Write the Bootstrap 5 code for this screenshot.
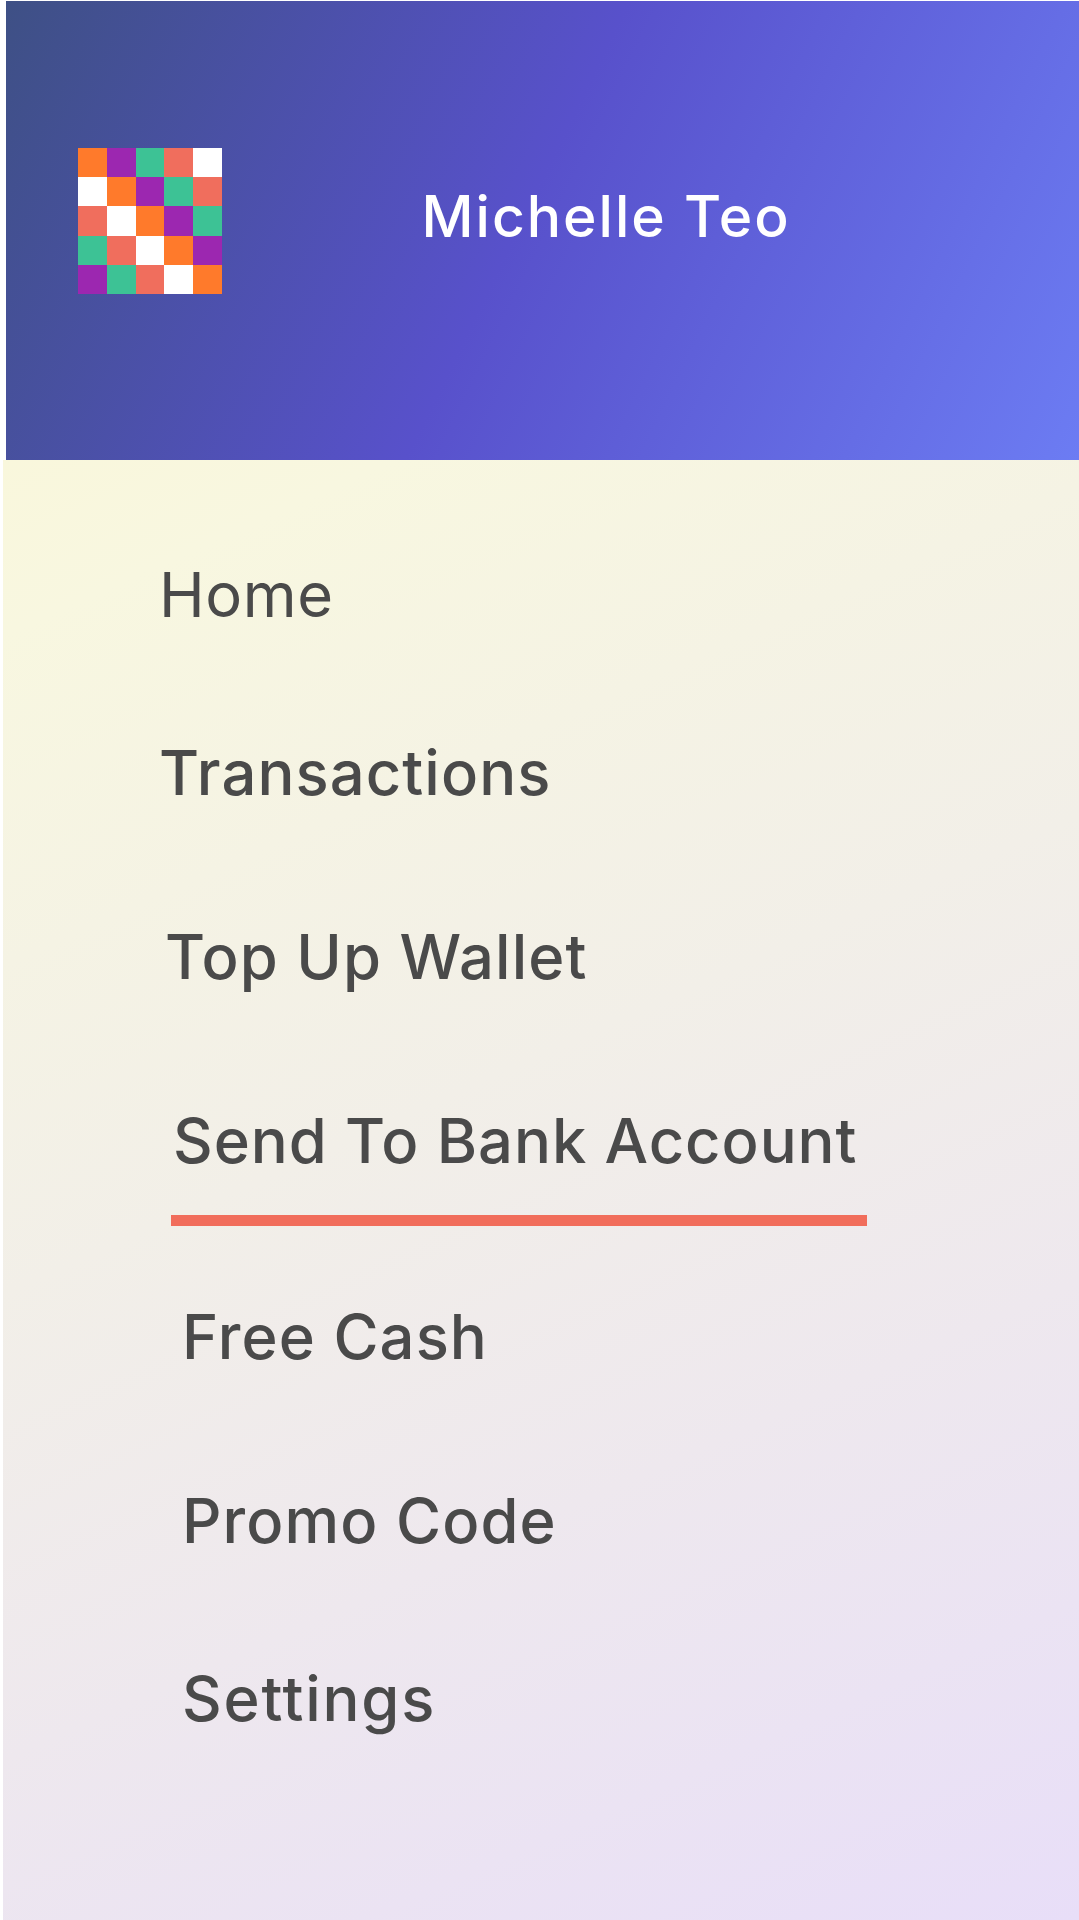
<!DOCTYPE html>
<html lang="en">
<head>
<meta charset="utf-8">
<meta name="viewport" content="width=device-width, initial-scale=1">
<title>Menu</title>
<link rel="stylesheet" href="https://cdn.jsdelivr.net/npm/bootstrap@5.3.0/dist/css/bootstrap.min.css">
<style>
body{background:#fff;font-family:Inter,"Liberation Sans",sans-serif;color:#4a4a4a}
.screen{height:1920px;overflow:hidden}
.profile{height:459px;margin:1px 0 0 6px;background:linear-gradient(116deg,#3e5085 0%,#5851cb 48%,#6c7cf3 100%)}
.avatar{width:144px;height:146px;margin:147px 0 0 72px}
.user{margin:176px 0 0 199.5px;font-size:57px;font-weight:500;line-height:80px;letter-spacing:2px;white-space:nowrap}
.menu-panel{margin-left:3px;padding-top:98px;background:linear-gradient(156deg,#f9f7dc 0%,#f8f7e0 9%,#f2efe8 43%,#eee8ee 67%,#e8def8 100%)}
.menu-panel .nav-link{padding:0;line-height:74px;font-size:61.5px;font-weight:500;letter-spacing:1.1px;color:#4a4a4a;white-space:nowrap}
.menu-panel .home-link{font-weight:400;letter-spacing:.6px;margin:0 0 104px 156px}
.menu-panel .history-link{margin:0 0 110px 156px}
.menu-panel .topup-link{margin:0 0 110px 162px}
.menu-panel .bank-link{width:696px;margin:0 0 73.5px 168px;padding:0 0 37px 2px;border-bottom:11px solid #f16d5b;letter-spacing:.95px}
.menu-panel .cash-link{margin:0 0 110px 179px}
.menu-panel .promo-link{margin:0 0 104px 179px}
.menu-panel .settings-link{margin-left:179px;letter-spacing:1.8px}
</style>
</head>
<body>
<div class="screen d-flex flex-column">
  <header class="profile d-flex align-items-start flex-shrink-0">
    <svg class="avatar flex-shrink-0" viewBox="0 0 5 5" preserveAspectRatio="none" shape-rendering="crispEdges" role="img" aria-label="Avatar">
      <rect width="5" height="5" fill="#fff"/>
      <path fill="#ff7a2b" d="M0 0h1v1H0zM1 1h1v1H1zM2 2h1v1H2zM3 3h1v1H3zM4 4h1v1H4z"/>
      <path fill="#9c27b0" d="M1 0h1v1H1zM2 1h1v1H2zM3 2h1v1H3zM4 3h1v1H4zM0 4h1v1H0z"/>
      <path fill="#3dc295" d="M2 0h1v1H2zM3 1h1v1H3zM4 2h1v1H4zM0 3h1v1H0zM1 4h1v1H1z"/>
      <path fill="#f06e5d" d="M3 0h1v1H3zM4 1h1v1H4zM0 2h1v1H0zM1 3h1v1H1zM2 4h1v1H2z"/>
    </svg>
    <h1 class="user text-white mb-0">Michelle Teo</h1>
  </header>
  <nav class="menu-panel nav flex-column flex-nowrap flex-grow-1">
    <a class="nav-link home-link" href="#">Home</a>
    <a class="nav-link history-link" href="#">Transactions</a>
    <a class="nav-link topup-link" href="#">Top Up Wallet</a>
    <a class="nav-link bank-link" href="#" aria-current="page">Send To Bank Account</a>
    <a class="nav-link cash-link" href="#">Free Cash</a>
    <a class="nav-link promo-link" href="#">Promo Code</a>
    <a class="nav-link settings-link" href="#">Settings</a>
  </nav>
</div>
<script src="https://cdn.jsdelivr.net/npm/bootstrap@5.3.0/dist/js/bootstrap.bundle.min.js"></script>
</body>
</html>
